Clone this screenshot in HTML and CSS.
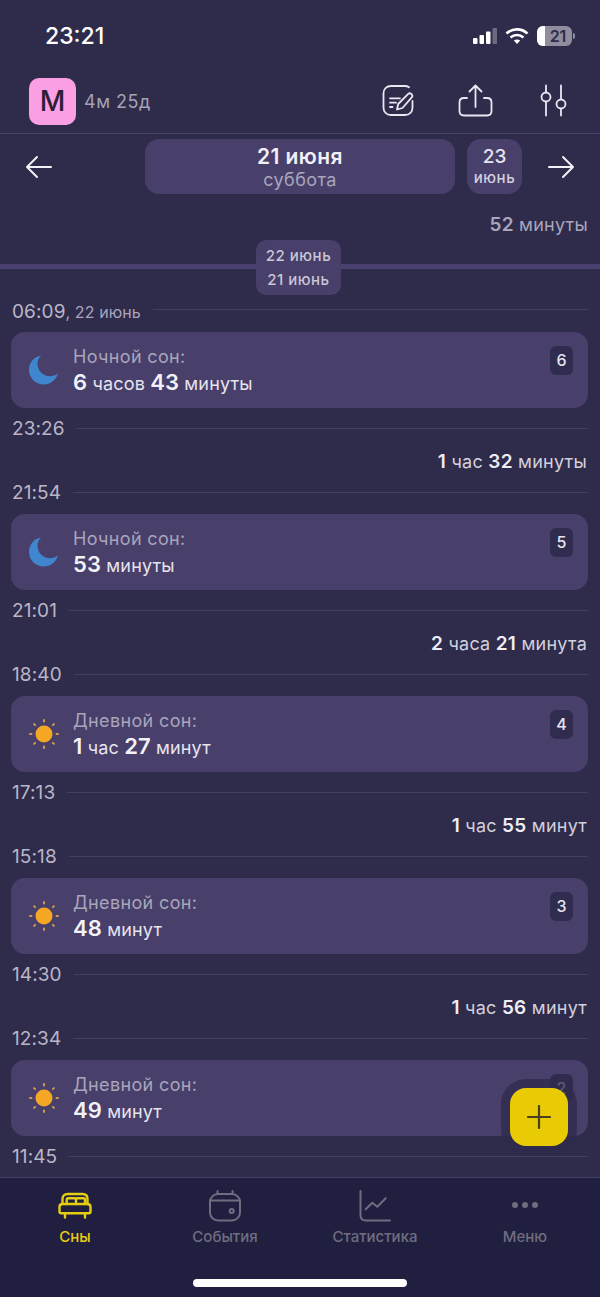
FILE: index.html
```html
<!DOCTYPE html>
<html lang="ru">
<head>
    <meta charset="UTF-8">
    <meta name="viewport" content="width=device-width, initial-scale=1.0">
    <title>Сны</title>
    <link rel="stylesheet" href="styles.css">
</head>
<body>
    <svg class="sprite" width="0" height="0">
        <symbol id="moon" viewBox="0 0 32 32">
            <path d="M13 1.500C6 2.600 1 8.600 1 16c0 8 6.600 14.500 14.600 14.500 7 0 12.800-4.800 14.400-11.300-2.200 1.900-5 3-8.100 3-6.900 0-12.400-5.500-12.400-12.400 0-3.200 1.300-6.200 3.500-8.300z" fill="#3f86cf"/>
        </symbol>
        <symbol id="sun" viewBox="0 0 32 32">
            <circle cx="16" cy="16" r="8.500" fill="#f5a623"/>
            <g stroke="#cf9a4f" stroke-width="2" stroke-linecap="round">
                <path d="M16 2v1.500M16 28.500V30M2 16h1.500M28.500 16H30M6.100 6.100l1 1M24.900 24.900l1 1M6.100 25.900l1-1M24.900 7.100l1-1"/>
            </g>
        </symbol>
    </svg>

    <!-- Status Bar -->
    <div class="status-bar">
        <span class="clock">23:21</span>
        <div class="status-icons">
            <svg width="26" height="18" viewBox="0 0 26 18">
                <rect x="0" y="11" width="4.500" height="6" rx="1" fill="#fff"/>
                <rect x="6.500" y="8" width="4.500" height="9" rx="1" fill="#fff"/>
                <rect x="13" y="4.500" width="4.500" height="12.500" rx="1" fill="#fff"/>
                <rect x="19.500" y="1" width="4.500" height="16" rx="1" fill="#6c6a80"/>
            </svg>
            <svg width="24" height="18" viewBox="0 0 24 18" fill="none" stroke="#fff" stroke-width="2.600">
                <path d="M1.500 6.500C7.500 1 16.500 1 22.500 6.500"/>
                <path d="M5.500 10.500c3.800-3.300 9.200-3.300 13 0"/>
                <path d="M12 17l-3.200-3.400c1.900-1.400 4.500-1.400 6.400 0z" fill="#fff" stroke="none"/>
            </svg>
            <div class="battery"><span class="battery-fill"></span><span class="battery-num">21</span></div>
            <span class="battery-cap"></span>
        </div>
    </div>

    <!-- Top Bar -->
    <div class="top-bar">
        <div class="avatar">М</div>
        <span class="age">4м 25д</span>
        <div class="top-actions">
            <svg width="32" height="33" viewBox="0 0 32 33" fill="none" stroke="#e9e7f1" stroke-width="1.800" stroke-linecap="round" stroke-linejoin="round">
                <path d="M27 3.200C25.800 2.400 24.500 2 23 2H9C4.500 2 1.500 5 1.500 9.500v14C1.500 28 4.500 31 9 31h14c4.500 0 7.500-3 7.500-7.500V17"/>
                <path d="M15 25.500l1.200-5.500L26 10.200c1-1 2.500-1 3.500 0s1 2.500 0 3.500L20.500 24z"/>
                <path d="M8 14.300h10M8 18.700h6M8 23h2.500"/>
            </svg>
            <svg width="42" height="33" viewBox="0 0 42 33" fill="none" stroke="#e9e7f1" stroke-width="1.800" stroke-linecap="round" stroke-linejoin="round">
                <path d="M13 14h-3c-3 0-4.500 1.500-4.500 4.500V27c0 3 1.500 4.500 4.500 4.500h23c3 0 4.500-1.500 4.500-4.500v-8.500c0-3-1.500-4.500-4.500-4.500h-3"/>
                <path d="M21.500 23V1.500M15.500 7.500l6-6 6 6"/>
            </svg>
            <svg width="36" height="33" viewBox="0 0 36 33" fill="none" stroke="#e9e7f1" stroke-width="1.800" stroke-linecap="round">
                <path d="M10 1.500V8M10 18v13.500M25 1.500V15M25 25v6.500"/>
                <circle cx="10" cy="13" r="4.500"/>
                <circle cx="25" cy="20" r="4.500"/>
            </svg>
        </div>
    </div>

    <!-- Date Nav -->
    <div class="date-nav">
        <svg class="arrow" width="28" height="24" viewBox="0 0 28 24" fill="none" stroke="#f2f1f6" stroke-width="2" stroke-linecap="round" stroke-linejoin="round"><path d="M26 12H2M12 2L2 12l10 10"/></svg>
        <div class="date-current">
            <span class="date-title">21 июня</span>
            <span class="date-sub">суббота</span>
        </div>
        <div class="date-next">
            <span class="next-day">23</span>
            <span class="next-month">июнь</span>
        </div>
        <svg class="arrow" width="28" height="24" viewBox="0 0 28 24" fill="none" stroke="#f2f1f6" stroke-width="2" stroke-linecap="round" stroke-linejoin="round"><path d="M2 12h24M16 2l10 10-10 10"/></svg>
    </div>

    <!-- Sleep List -->
    <div class="timeline">
        <div class="duration top-duration"><b>52</b> минуты</div>
        <div class="day-split">
            <div class="day-pill"><span>22 июнь</span><span>21 июнь</span></div>
        </div>

        <div class="time-row first-row"><span class="time">06:09<small>, 22 июнь</small></span><i></i></div>
        <div class="card">
            <svg class="card-icon" width="32" height="32"><use href="#moon"/></svg>
            <div class="card-text">
                <span class="card-label">Ночной сон:</span>
                <span class="card-value"><b>6</b> часов <b>43</b> минуты</span>
            </div>
            <span class="badge">6</span>
        </div>
        <div class="time-row"><span class="time">23:26</span><i></i></div>
        <div class="duration"><b>1</b> час <b>32</b> минуты</div>
        <div class="time-row"><span class="time">21:54</span><i></i></div>
        <div class="card">
            <svg class="card-icon" width="32" height="32"><use href="#moon"/></svg>
            <div class="card-text">
                <span class="card-label">Ночной сон:</span>
                <span class="card-value"><b>53</b> минуты</span>
            </div>
            <span class="badge">5</span>
        </div>
        <div class="time-row"><span class="time">21:01</span><i></i></div>
        <div class="duration"><b>2</b> часа <b>21</b> минута</div>
        <div class="time-row"><span class="time">18:40</span><i></i></div>
        <div class="card">
            <svg class="card-icon" width="32" height="32"><use href="#sun"/></svg>
            <div class="card-text">
                <span class="card-label">Дневной сон:</span>
                <span class="card-value"><b>1</b> час <b>27</b> минут</span>
            </div>
            <span class="badge">4</span>
        </div>
        <div class="time-row"><span class="time">17:13</span><i></i></div>
        <div class="duration"><b>1</b> час <b>55</b> минут</div>
        <div class="time-row"><span class="time">15:18</span><i></i></div>
        <div class="card">
            <svg class="card-icon" width="32" height="32"><use href="#sun"/></svg>
            <div class="card-text">
                <span class="card-label">Дневной сон:</span>
                <span class="card-value"><b>48</b> минут</span>
            </div>
            <span class="badge">3</span>
        </div>
        <div class="time-row"><span class="time">14:30</span><i></i></div>
        <div class="duration"><b>1</b> час <b>56</b> минут</div>
        <div class="time-row"><span class="time">12:34</span><i></i></div>
        <div class="card">
            <svg class="card-icon" width="32" height="32"><use href="#sun"/></svg>
            <div class="card-text">
                <span class="card-label">Дневной сон:</span>
                <span class="card-value"><b>49</b> минут</span>
            </div>
            <span class="badge">2</span>
        </div>
        <div class="time-row"><span class="time">11:45</span><i></i></div>
    </div>

    <!-- Add Button -->
    <button class="fab">
        <svg width="24" height="24" viewBox="0 0 24 24" stroke="#4a3f1e" stroke-width="2.200" stroke-linecap="round"><path d="M12 1v22M1 12h22"/></svg>
    </button>

    <!-- Tab Bar -->
    <div class="tab-bar">
        <div class="tab active">
            <svg width="34" height="34" viewBox="0 0 34 34" fill="none" stroke="#e6ce12" stroke-width="2.400" stroke-linejoin="round" stroke-linecap="round">
                <path d="M4.500 14V9c0-3 2-5 5-5h15c3 0 5 2 5 5v5"/>
                <path d="M1.500 21.500V17c0-2 1-3 3-3h25c2 0 3 1 3 3v4.500c0 1.200-.6 1.800-1.800 1.800H3.300c-1.200 0-1.800-.6-1.800-1.800z"/>
                <path d="M8.700 14V9.800c0-1 .5-1.500 1.500-1.500h6.300c1 0 1.500.5 1.500 1.500V14M18 14V9.800c0-1 .5-1.500 1.500-1.500h6c1 0 1.500.5 1.500 1.500V14"/>
                <path d="M7 24v3.500M27 24v3.500"/>
            </svg>
            <span>Сны</span>
        </div>
        <div class="tab">
            <svg width="32" height="34" viewBox="0 0 32 34" fill="none" stroke="#6f6d80" stroke-width="2" stroke-linecap="round">
                <rect x="1" y="4" width="30" height="26.500" rx="8"/>
                <path d="M8.500 1v3M23.500 1v3M1 10.500h30"/>
                <circle cx="22.700" cy="21" r="2"/>
            </svg>
            <span>События</span>
        </div>
        <div class="tab">
            <svg width="32" height="34" viewBox="0 0 32 34" fill="none" stroke="#6f6d80" stroke-width="2" stroke-linecap="round" stroke-linejoin="round">
                <path d="M1.500 1v24c0 3.500 2 5.500 5.500 5.500h24"/>
                <path d="M6.700 19.300l6.600-6.600 5 4 8.400-8.400"/>
            </svg>
            <span>Статистика</span>
        </div>
        <div class="tab">
            <svg width="32" height="34" viewBox="0 0 32 34" fill="#6f6d80">
                <circle cx="6" cy="15" r="3"/>
                <circle cx="16" cy="15" r="3"/>
                <circle cx="26" cy="15" r="3"/>
            </svg>
            <span>Меню</span>
        </div>
        <span class="home-bar"></span>
    </div>
</body>
</html>
```
FILE: styles.css
```css
/* Basic reset and font setup */
* {
    margin: 0;
    padding: 0;
    box-sizing: border-box;
}

body {
    position: relative;
    width: 600px;
    height: 1297px;
    overflow: hidden;
    display: flex;
    flex-direction: column;
    font-family: 'Inter', 'Noto Sans', sans-serif;
    background-color: #2f2b4b;
    color: #fff;
}

.sprite {
    position: absolute;
}

/* Status Bar */
.status-bar {
    height: 72px;
    flex-shrink: 0;
    display: flex;
    justify-content: space-between;
    align-items: center;
    padding: 0 25px 0 45px;
}

.clock {
    font-size: 23px;
    font-weight: 500;
}

.status-icons {
    display: flex;
    align-items: center;
    gap: 6px;
}

.battery {
    position: relative;
    width: 35px;
    height: 20px;
    margin-left: 2px;
    border-radius: 6px;
    overflow: hidden;
    background-color: #8f8d9e;
}

.battery-fill {
    position: absolute;
    left: 0;
    top: 0;
    bottom: 0;
    width: 8px;
    background-color: #fff;
}

.battery-num {
    position: absolute;
    left: 7px;
    right: 0;
    top: 0;
    line-height: 20px;
    text-align: center;
    font-size: 16px;
    font-weight: 600;
    color: #2f2b4b;
}

.battery-cap {
    width: 2px;
    height: 6px;
    margin-left: -5px;
    border-radius: 0 2px 2px 0;
    background-color: #8f8d9e;
}

/* Top Bar */
.top-bar {
    height: 62px;
    flex-shrink: 0;
    display: flex;
    align-items: flex-start;
    padding: 6px 28px 0 29px;
    border-bottom: 1px solid #48436a;
}

.avatar {
    width: 47px;
    height: 47px;
    border-radius: 10px;
    background-color: #fb9fe4;
    color: #2b2035;
    font-size: 28px;
    font-weight: 500;
    line-height: 47px;
    text-align: center;
}

.age {
    margin-left: 8px;
    line-height: 47px;
    font-size: 18px;
    letter-spacing: 0.5px;
    color: #a5a2b5;
}

.top-actions {
    margin-left: auto;
    display: flex;
    gap: 40px;
    padding-top: 6px;
}

/* Date Nav */
.date-nav {
    height: 66px;
    flex-shrink: 0;
    display: flex;
    align-items: flex-start;
    padding: 5px 25px 0;
}

.arrow {
    margin-top: 16px;
    flex-shrink: 0;
}

.date-current {
    width: 310px;
    height: 55px;
    margin-left: 92px;
    padding-top: 3px;
    border-radius: 14px;
    background-color: #483f6b;
    display: flex;
    flex-direction: column;
    align-items: center;
    justify-content: center;
}

.date-title {
    font-size: 21px;
    font-weight: 600;
    line-height: 24px;
    letter-spacing: 0.4px;
    color: #f1f0f6;
}

.date-sub {
    font-size: 18px;
    line-height: 22px;
    letter-spacing: 0.4px;
    color: #a9a5bb;
}

.date-next {
    width: 55px;
    height: 55px;
    margin-left: 12px;
    margin-right: 25px;
    border-radius: 14px;
    background-color: #483f6b;
    display: flex;
    flex-direction: column;
    align-items: center;
    justify-content: center;
}

.next-day {
    font-size: 19px;
    line-height: 23px;
    font-weight: 500;
    color: #e6e4ee;
}

.next-month {
    font-size: 15px;
    line-height: 20px;
    font-weight: 500;
    letter-spacing: 0.6px;
    color: #d2cfdf;
}

/* Sleep List */
.timeline {
    flex: 1;
    min-height: 0;
    overflow: hidden;
    padding: 0 12px;
}

.duration {
    height: 22px;
    padding-right: 1px;
    line-height: 24px;
    text-align: right;
    font-size: 18px;
    letter-spacing: 0.25px;
    color: #d2d0dd;
}

.duration b {
    font-size: 19px;
    font-weight: 600;
    color: #eeedf4;
}

.top-duration {
    margin-top: 13px;
    padding-right: 0;
    color: #a9a5bb;
}

.top-duration b {
    color: #a9a5bb;
}

.day-split {
    position: relative;
    height: 55px;
    margin: 5px -12px 0;
    display: flex;
    align-items: center;
    justify-content: center;
}

.day-split::before {
    content: '';
    position: absolute;
    left: 0;
    right: 0;
    top: 24px;
    height: 5px;
    background-color: #4a4170;
}

.day-pill {
    position: relative;
    width: 85px;
    height: 55px;
    margin-left: -3px;
    border-radius: 10px;
    background-color: #483f6b;
    display: flex;
    flex-direction: column;
    align-items: center;
    justify-content: center;
    gap: 4px;
    font-size: 15px;
    line-height: 20px;
    letter-spacing: 0.5px;
    font-weight: 500;
    color: #c9c6d6;
}

.time-row {
    height: 42px;
    padding-bottom: 2px;
    display: flex;
    align-items: center;
    gap: 12px;
}

.first-row {
    height: 37px;
    padding-bottom: 8px;
}

.first-row .time {
    margin-top: 3px;
}

.time-row i {
    flex: 1;
    height: 1px;
    background-color: #433e62;
}

.time {
    font-size: 19px;
    letter-spacing: 0.1px;
    color: #b9b6c7;
}

.time small {
    font-size: 16px;
    color: #a9a5bb;
}

.card {
    height: 76px;
    margin-left: -1px;
    border-radius: 14px;
    background-color: #483f6b;
    display: flex;
    align-items: center;
    padding: 0 15px 0 17px;
}

.card-icon {
    flex-shrink: 0;
}

.card-text {
    margin-left: 13px;
    padding-top: 1px;
    display: flex;
    flex-direction: column;
}

.card-label {
    font-size: 18px;
    line-height: 24px;
    letter-spacing: 0.35px;
    color: #a9a5bb;
}

.card-value {
    font-size: 18px;
    line-height: 26px;
    letter-spacing: 0.15px;
    color: #e6e4ee;
}

.card-value b {
    font-size: 22px;
    font-weight: 600;
    color: #f2f1f6;
}

.badge {
    align-self: flex-start;
    margin-top: 14px;
    margin-left: auto;
    width: 23px;
    height: 29px;
    border-radius: 6px;
    background-color: #302c4f;
    color: #e6e4ee;
    font-size: 16px;
    font-weight: 500;
    line-height: 29px;
    text-align: center;
}

/* Add Button */
.fab {
    position: absolute;
    left: 510px;
    top: 1088px;
    width: 58px;
    height: 58px;
    border: none;
    border-radius: 16px;
    background-color: #e8cb04;
    box-shadow: 0 0 0 9px rgba(47, 43, 75, 0.75);
    display: flex;
    align-items: center;
    justify-content: center;
}

/* Tab Bar */
.tab-bar {
    position: relative;
    height: 120px;
    flex-shrink: 0;
    display: flex;
    padding-top: 12px;
    background-color: #211f3f;
    border-top: 1px solid #45406a;
}

.tab {
    flex: 1;
    display: flex;
    flex-direction: column;
    align-items: center;
    gap: 4px;
    font-size: 15px;
    line-height: 18px;
    font-weight: 500;
    color: #6f6d80;
}

.tab.active {
    color: #e6ce12;
}

.home-bar {
    position: absolute;
    left: 193px;
    bottom: 10px;
    width: 214px;
    height: 8px;
    border-radius: 4px;
    background-color: #fff;
}
```
